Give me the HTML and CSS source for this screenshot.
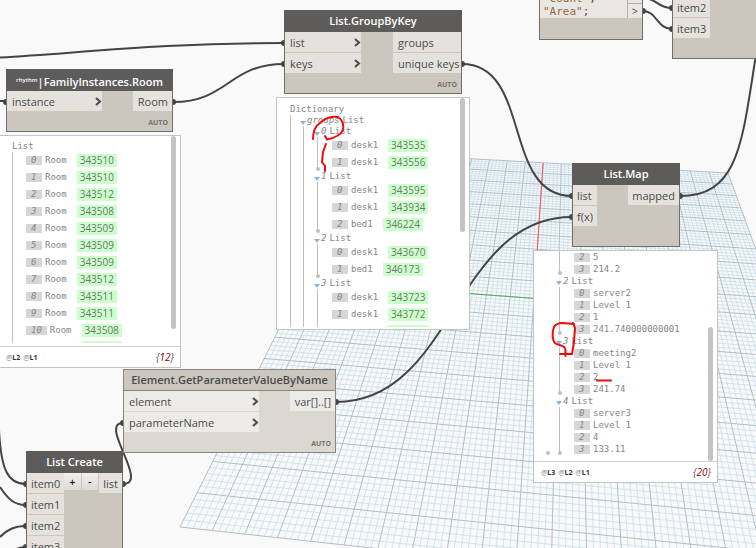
FILE: index.html
```html
<!DOCTYPE html>
<html lang="en">
<head>
    <meta charset="UTF-8">
    <meta name="viewport" content="width=device-width, initial-scale=1.0">
    <title>Workspace</title>
    <link rel="stylesheet" href="styles.css">
</head>
<body>

    <main class="workspace">
        <svg class="layer" id="grid" aria-hidden="true">
            <path class="grid-minor" id="grid-minor"/>
            <path class="grid-major" id="grid-major"/>
            <path class="axis-y" id="axis-y"/>
            <path class="axis-x" id="axis-x"/>
        </svg>

        <svg class="layer wires" aria-hidden="true">
            <path d="M-80 60 C40 60 120 43 284 43"/>
            <path d="M0 101 H6"/>
            <path d="M173 102 C228 102 229 64 284 64"/>
            <path d="M462 64 C532 64 502 196 572 196"/>
            <path d="M680 196 C740 196 742 140 756 55"/>
            <path d="M336 402 C454 402 454 217 572 217"/>
            <path d="M-1 430 C1 470 8 484 26 484"/>
            <path d="M0 487 C8 499 14 505 26 505"/>
            <path d="M0 537 C8 529 15 526 26 526"/>
            <path d="M14 550 C18 548 20 547 26 547"/>
            <path d="M123 484 C150 484 98 423 123 423"/>
            <path d="M643 -2 C657 -2 657 8 672 8"/>
            <path d="M643 11 C657 11 657 29 672 29"/>
            <g class="knobs">
                <circle cx="284" cy="43" r="2"/>
                <circle cx="284" cy="64" r="2"/>
                <circle cx="462" cy="64" r="2"/>
                <circle cx="6" cy="102" r="2"/>
                <circle cx="173" cy="102" r="2"/>
                <circle cx="572" cy="196" r="2"/>
                <circle cx="572" cy="217" r="2"/>
                <circle cx="680" cy="196" r="2"/>
                <circle cx="336" cy="402" r="2"/>
                <circle cx="123" cy="423" r="2"/>
                <circle cx="123" cy="484" r="2"/>
                <circle cx="26" cy="484" r="2"/>
                <circle cx="26" cy="505" r="2"/>
                <circle cx="26" cy="526" r="2"/>
                <circle cx="26" cy="547" r="2"/>
                <circle cx="643" cy="11" r="2"/>
                <circle cx="672" cy="8" r="2"/>
                <circle cx="672" cy="29" r="2"/>
            </g>
        </svg>

        <section class="node node-code">
            <div class="code-body">
                <pre class="code"><span>"Count"</span>;
<span>"Area"</span>;</pre>
                <div class="code-outs">
                    <div class="code-out"></div>
                    <div class="code-out">&gt;</div>
                </div>
            </div>
            <div class="node-foot"></div>
        </section>

        <section class="node node-items">
            <div class="ports">
                <div class="inputs">
                    <div class="port">item2</div>
                    <div class="port">item3</div>
                </div>
            </div>
            <div class="node-foot"></div>
        </section>

        <section class="node node-room">
            <h2 class="node-title"><small>rhythm</small>|FamilyInstances.Room</h2>
            <div class="ports">
                <div class="inputs">
                    <div class="port">instance <svg class="chevron" viewBox="0 0 7 9"><path d="M1 1 L5 4.5 L1 8"/></svg></div>
                </div>
                <div class="outputs">
                    <div class="port">Room</div>
                </div>
            </div>
            <div class="node-foot">AUTO</div>
        </section>

        <section class="node node-group">
            <h2 class="node-title">List.GroupByKey</h2>
            <div class="ports">
                <div class="inputs">
                    <div class="port">list <svg class="chevron" viewBox="0 0 7 9"><path d="M1 1 L5 4.5 L1 8"/></svg></div>
                    <div class="port">keys <svg class="chevron" viewBox="0 0 7 9"><path d="M1 1 L5 4.5 L1 8"/></svg></div>
                </div>
                <div class="outputs">
                    <div class="port">groups</div>
                    <div class="port">unique keys</div>
                </div>
            </div>
            <div class="node-foot">AUTO</div>
        </section>

        <section class="node node-map">
            <h2 class="node-title">List.Map</h2>
            <div class="ports">
                <div class="inputs">
                    <div class="port">list</div>
                    <div class="port">f(x)</div>
                </div>
                <div class="outputs">
                    <div class="port">mapped</div>
                </div>
            </div>
            <div class="node-foot"></div>
        </section>

        <section class="node node-create">
            <h2 class="node-title">List Create</h2>
            <div class="ports">
                <div class="inputs">
                    <div class="port">item0</div>
                    <div class="port">item1</div>
                    <div class="port">item2</div>
                    <div class="port">item3</div>
                </div>
                <div class="steppers">
                    <button type="button" aria-label="Add item">+</button>
                    <button type="button" aria-label="Remove item">-</button>
                </div>
                <div class="outputs">
                    <div class="port">list</div>
                </div>
            </div>
        </section>

        <section class="preview preview-room">
            <div class="preview-body">
                <div class="head">List</div>
                <div class="leaves spaced">
                    <div class="row"><i>0</i>Room<b>343510</b></div>
                    <div class="row"><i>1</i>Room<b>343510</b></div>
                    <div class="row"><i>2</i>Room<b>343512</b></div>
                    <div class="row"><i>3</i>Room<b>343508</b></div>
                    <div class="row"><i>4</i>Room<b>343509</b></div>
                    <div class="row"><i>5</i>Room<b>343509</b></div>
                    <div class="row"><i>6</i>Room<b>343509</b></div>
                    <div class="row"><i>7</i>Room<b>343512</b></div>
                    <div class="row"><i>8</i>Room<b>343511</b></div>
                    <div class="row"><i>9</i>Room<b>343511</b></div>
                    <div class="row"><i>10</i>Room<b>343508</b></div>
                    <div class="row"><i>11</i>Room<b>343508</b></div>
                </div>
                <div class="thumb"></div>
            </div>
            <div class="preview-foot">
                <span class="levels"><span>@<b>L2</b></span> <span>@<b>L1</b></span></span>
                <span class="count">{<em>12</em>}</span>
            </div>
        </section>

        <section class="preview preview-group">
            <div class="preview-body">
                <div class="head">Dictionary</div>
                <div class="branches">
                    <div class="head nested"><em>groups</em>List</div>
                    <div class="branches deep">
                        <div class="head nested"><em>0</em>List</div>
                        <div class="leaves spaced">
                            <div class="row"><i>0</i>desk1<b>343535</b></div>
                            <div class="row"><i>1</i>desk1<b>343556</b></div>
                        </div>
                        <div class="head nested"><em>1</em>List</div>
                        <div class="leaves spaced">
                            <div class="row"><i>0</i>desk1<b>343595</b></div>
                            <div class="row"><i>1</i>desk1<b>343934</b></div>
                            <div class="row"><i>2</i>bed1<b>346224</b></div>
                        </div>
                        <div class="head nested"><em>2</em>List</div>
                        <div class="leaves spaced">
                            <div class="row"><i>0</i>desk1<b>343670</b></div>
                            <div class="row"><i>1</i>bed1<b>346173</b></div>
                        </div>
                        <div class="head nested"><em>3</em>List</div>
                        <div class="leaves spaced">
                            <div class="row"><i>0</i>desk1<b>343723</b></div>
                            <div class="row"><i>1</i>desk1<b>343772</b></div>
                            <div class="row"><i>2</i>desk1<b>343772</b></div>
                        </div>
                    </div>
                </div>
                <div class="thumb"></div>
            </div>
        </section>

        <section class="preview preview-map">
            <div class="preview-body">
                <div class="branches hidden-line">
                    <div class="leaves">
                        <div class="row"><i>2</i>5</div>
                        <div class="row"><i>3</i>214.2</div>
                    </div>
                    <div class="head nested"><em>2</em>List</div>
                    <div class="leaves">
                        <div class="row"><i>0</i>server2</div>
                        <div class="row"><i>1</i>Level 1</div>
                        <div class="row"><i>2</i>1</div>
                        <div class="row"><i>3</i>241.740000000001</div>
                    </div>
                    <div class="head nested"><em>3</em>List</div>
                    <div class="leaves">
                        <div class="row"><i>0</i>meeting2</div>
                        <div class="row"><i>1</i>Level 1</div>
                        <div class="row"><i>2</i>2</div>
                        <div class="row"><i>3</i>241.74</div>
                    </div>
                    <div class="head nested"><em>4</em>List</div>
                    <div class="leaves">
                        <div class="row"><i>0</i>server3</div>
                        <div class="row"><i>1</i>Level 1</div>
                        <div class="row"><i>2</i>4</div>
                        <div class="row"><i>3</i>133.11</div>
                    </div>
                </div>
                <div class="thumb"></div>
            </div>
            <div class="preview-foot">
                <span class="levels"><span>@<b>L3</b></span><span>@<b>L2</b></span> <span>@<b>L1</b></span></span>
                <span class="count">{<em>20</em>}</span>
            </div>
        </section>

        <section class="node node-element light">
            <h2 class="node-title">Element.GetParameterValueByName</h2>
            <div class="ports">
                <div class="inputs">
                    <div class="port">element <svg class="chevron" viewBox="0 0 7 9"><path d="M1 1 L5 4.5 L1 8"/></svg></div>
                    <div class="port">parameterName <svg class="chevron" viewBox="0 0 7 9"><path d="M1 1 L5 4.5 L1 8"/></svg></div>
                </div>
                <div class="outputs">
                    <div class="port">var[]..[]</div>
                </div>
            </div>
            <div class="node-foot">AUTO</div>
        </section>

        <!-- red pen notes -->
        <svg class="layer pen" aria-hidden="true">
            <path d="M313 139 C313 132 315 126 320 123 C325 118 332 116 338 117 C343 120 344 126 343 130 C341 135 334 138 327 139.500 L325 136"/>
            <path d="M326 144 L323 152 L322 162 L325 166 L325 171"/>
            <path d="M574 324 L563 323 Q556 323 554 327 C552 332 552 340 555 343 C558 346 565 344 565.500 350 V356"/>
            <path d="M573 323 L575 328 L574 342 L572 354 L560 354"/>
            <path d="M597 380.500 H611"/>
        </svg>
    </main>

    <script src="script.js"></script>
</body>
</html>
```

FILE: styles.css
```css
body {
    margin: 0;
    font-family: "Open Sans", sans-serif;
    background-color: #f9f9f9;
}
.workspace {
    position: relative;
    height: 100vh;
    overflow: hidden;
}
.layer {
    position: absolute;
    inset: 0;
    width: 100%;
    height: 100%;
    fill: none;
    pointer-events: none;
}

/* background grid */
.grid-minor {
    stroke: #c6deea;
    stroke-width: 0.8;
}
.grid-major {
    stroke: #b0bfc8;
    stroke-width: 1;
}
.axis-y {
    stroke: #ff5050;
}
.axis-x {
    stroke: #4fb04f;
}

/* wires */
.wires {
    stroke: #444;
    stroke-width: 2;
}
.knobs {
    fill: #444;
}
.pen {
    stroke: #f00a0a;
    stroke-width: 2;
    stroke-linecap: round;
    stroke-linejoin: round;
}

/* nodes */
.node {
    position: absolute;
    box-sizing: border-box;
    border: 1px solid #716e6a;
    background-color: #cbc6be;
    color: #4b4b4b;
    font-size: 11px;
}
.node-room { left: 6px; top: 69px; width: 167px; }
.node-group { left: 284px; top: 10px; width: 178px; }
.node-map { left: 572px; top: 163px; width: 108px; }
.node-create { left: 26px; top: 451px; width: 97px; height: 120px; }
.node-element { left: 123px; top: 369px; width: 213px; }
.node-code { left: 539px; top: -12px; width: 104px; }
.node-items { left: 672px; top: -4px; width: 120px; }

.node-title {
    margin: -1px -1px 0;
    height: 22px;
    line-height: 22px;
    background-color: #5e5c5a;
    color: #fff;
    font-size: 11px;
    font-weight: 600;
    text-align: center;
    white-space: nowrap;
}
.node-title small {
    font-size: 6px;
    vertical-align: 4px;
}
.ports {
    display: flex;
    align-items: flex-start;
    justify-content: space-between;
}
.inputs,
.outputs {
    display: flex;
    flex-direction: column;
    gap: 1px;
}
.port {
    display: flex;
    align-items: center;
    justify-content: space-between;
    box-sizing: border-box;
    height: 20px;
    padding: 0 4px 0 5px;
    background-color: #e5e2dd;
    white-space: nowrap;
}
.node-room .inputs { width: 95px; }
.node-group .inputs { width: 76px; }
.node-element .inputs { width: 135px; }
.node-create .inputs { width: 37px; }
.node-items .inputs { width: 37px; }
.node-map .inputs { width: 24px; }
.node-map .port,
.node-create .port,
.node-items .port {
    padding: 0 4px;
}
.node-group .outputs { width: 68px; }
.inputs .port {
    padding-right: 0;
}
.chevron {
    width: 7px;
    height: 9px;
    fill: none;
    stroke: #4b4b4b;
    stroke-width: 2;
}
.node-foot {
    height: 20px;
    padding-right: 4px;
    line-height: 24px;
    font-size: 7px;
    font-weight: 700;
    text-align: right;
    color: #77736e;
}
.light {
    border-color: #8a8782;
    background-color: #dbd8d2;
}
.light .node-title {
    margin: 0;
    height: 21px;
    border-bottom: 1px solid #8a8782;
    box-sizing: border-box;
    line-height: 20px;
    background-color: #cbc6be;
    color: #4b4b4b;
}
.light .port {
    background-color: #edebe8;
}
.steppers {
    display: flex;
    flex: 1;
    gap: 1px;
    margin-right: 1px;
}
.steppers button {
    flex: 1;
    height: 17px;
    padding: 0;
    border: none;
    background: linear-gradient(#f1f0ee, #dddad5);
    color: #000;
    font: 600 10px "Open Sans", sans-serif;
}

.code-body {
    display: flex;
    height: 29px;
    background-color: #e9e6e3;
}
.code {
    flex: 1;
    margin: 0;
    padding: 3px 3px 0;
    font: 11px/13px "DejaVu Sans Mono", monospace;
}
.code span {
    color: #96673c;
}
.code-outs {
    width: 14px;
    border-left: 1px solid #b5b1ab;
    text-align: center;
    line-height: 14px;
}
.code-out {
    height: 14px;
}
.code-out + .code-out {
    border-top: 1px solid #b5b1ab;
}
.node-code .node-foot {
    height: 21px;
}

/* previews */
.preview {
    position: absolute;
    box-sizing: border-box;
    display: flex;
    flex-direction: column;
    height: 233px;
    border: 1px solid #c4c4c4;
    background-color: #fff;
    color: #858585;
    font: 9px/11px "DejaVu Sans Mono", monospace;
}
.preview-room { left: -12px; top: 135px; width: 193px; }
.preview-group { left: 276px; top: 97px; width: 194px; }
.preview-map { left: 533px; top: 250px; width: 185px; }
.preview-body {
    position: relative;
    flex: 1;
    min-height: 0;
    overflow: hidden;
    white-space: nowrap;
}
.preview-room .preview-body { padding: 5px 0 0 23px; margin-bottom: 3px; }
.preview-group .preview-body { padding: 6px 0 0 13px; margin-bottom: 2px; }
.preview-map .preview-body { padding-left: 13px; line-height: 12px; }
.branches,
.leaves {
    position: relative;
    border-left: 1px solid #c0c0c0;
}
.branches {
    padding-left: 9px;
}
.deep {
    margin-left: 3px;
    padding-left: 10px;
}
.hidden-line {
    border-color: transparent;
    padding-left: 8px;
}
.leaves {
    padding-left: 13px;
}
.branches .leaves {
    margin-left: 3px;
    padding-left: 14px;
}
.leaves::after,
.hidden-line::after {
    content: "";
    position: absolute;
    left: -2px;
    bottom: 0;
    width: 4px;
    height: 4px;
    border-radius: 50%;
    background-color: #c0c0c0;
}
.nested {
    display: flex;
    align-items: center;
}
.nested::before {
    content: "";
    margin-top: 4px;
    border: 3px solid transparent;
    border-top: 4px solid #8ab6dc;
    border-bottom: none;
}
.nested em {
    margin: 0 3px 0 1px;
}
.row {
    display: flex;
    align-items: center;
    height: 12px;
}
.spaced .row {
    height: 17px;
}
.row i {
    min-width: 6px;
    margin-right: 3px;
    padding: 0 5px;
    background-color: #d6d6d6;
    line-height: 9px;
}
.row b {
    margin-left: 10px;
    padding: 0 3px;
    background-color: #ccffcc;
    color: #6c776c;
    font: 10px/13px "Open Sans", sans-serif;
}
.thumb {
    position: absolute;
    right: 4px;
    top: 0;
    width: 5px;
    height: 193px;
    border-radius: 3px;
    background-color: #c4c4c4;
}
.preview-group .thumb {
    height: 134px;
}
.preview-map .thumb {
    top: auto;
    bottom: 0;
    height: 134px;
}
.preview-foot {
    display: flex;
    align-items: center;
    justify-content: space-between;
    height: 20px;
    padding: 0 6px 0 7px;
    border-top: 1px solid #d0d0d0;
    font-family: "Open Sans", sans-serif;
}
.preview-room .preview-foot {
    padding-left: 17px;
}
.levels {
    display: flex;
    gap: 3px;
    font-size: 7px;
}
.levels b {
    color: #333;
}
.count {
    font-size: 10px;
    font-style: italic;
    color: #555;
}
.count em {
    color: #8b0000;
}
```

FILE: script.js
```javascript
// corners of the ground plane: near left, near right, far right, far left
const corners = [[180, 527], [885, 604], [728, 173], [367, 153]];
const majors = 20;
const step = 5;

const [p0, p1, p2, p3] = corners;
const dx1 = p1[0] - p2[0], dx2 = p3[0] - p2[0], sx = p0[0] - p1[0] + p2[0] - p3[0];
const dy1 = p1[1] - p2[1], dy2 = p3[1] - p2[1], sy = p0[1] - p1[1] + p2[1] - p3[1];
const den = dx1 * dy2 - dx2 * dy1;
const g = (sx * dy2 - dx2 * sy) / den;
const h = (dx1 * sy - dy1 * sx) / den;

function project(u, v) {
    const w = g * u + h * v + 1;
    return [0, 1].map(i => {
        const a = p1[i] * (1 + g) - p0[i];
        const b = p3[i] * (1 + h) - p0[i];
        return ((a * u + b * v + p0[i]) / w).toFixed(2);
    }).join(" ");
}

function line(u1, v1, u2, v2) {
    return "M" + project(u1, v1) + "L" + project(u2, v2);
}

let minor = "";
let major = "";
const count = majors * step;
for (let i = 0; i <= count; i++) {
    const t = i / count;
    const d = line(t, 0, t, 1) + line(0, t, 1, t);
    if (i % step === 0) {
        major += d;
    } else {
        minor += d;
    }
}

document.getElementById("grid-minor").setAttribute("d", minor);
document.getElementById("grid-major").setAttribute("d", major);
document.getElementById("axis-y").setAttribute("d", line(0.5, 0.5, 0.5, 1));
document.getElementById("axis-x").setAttribute("d", line(0, 0.5, 0.5, 0.5));
```
